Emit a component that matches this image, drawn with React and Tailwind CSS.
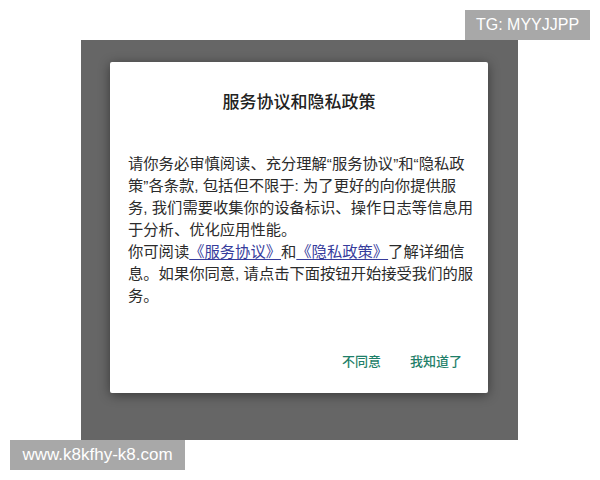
const cjk = { fontFamily: '"Liberation Sans", "Noto Sans CJK SC", sans-serif' };

const Link = ({ children }) => (
  <span className="text-[#363c9c] underline underline-offset-2 decoration-[1px]">{children}</span>
);

const App = () => {
  return (
    <div className="w-[600px] h-[480px] bg-white overflow-hidden" style={cjk}>
      {/* top watermark */}
      <div className="flex justify-end pt-[10px] pr-[10px]">
        <div className="h-[30px] w-[125px] bg-[#a8a8a8] text-white text-[16px] flex items-center justify-center">
          TG: MYYJJPP
        </div>
      </div>

      {/* dimmed screen */}
      <div className="ml-[81px] w-[437px] h-[400px] bg-[#666666] pt-[22px] pl-[29px]">
        <div className="w-[378px] h-[331px] bg-white rounded-[2px] shadow-[0_2px_12px_rgba(0,0,0,0.45)] flex flex-col">
          <h1 className="pt-[29px] text-center text-[17px] leading-[24px] font-medium text-[#222]">
            服务协议和隐私政策
          </h1>

          <p className="mt-[38px] pl-[18px] text-[15.3px] leading-[22px] text-[#2b2b2b] whitespace-nowrap">
            请你务必审慎阅读、充分理解“服务协议”和“隐私政
            <br />
            策”各条款, 包括但不限于: 为了更好的向你提供服
            <br />
            务, 我们需要收集你的设备标识、操作日志等信息用
            <br />
            于分析、优化应用性能。
            <br />
            你可阅读<Link>《服务协议》</Link>和<Link>《隐私政策》</Link>了解详细信
            <br />
            息。如果你同意, 请点击下面按钮开始接受我们的服
            <br />
            务。
          </p>

          <div className="mt-[45px] flex justify-end gap-[29px] pr-[26px] text-[13px] leading-[20px] font-medium text-[#1f7f69]">
            <button type="button">不同意</button>
            <button type="button">我知道了</button>
          </div>
        </div>
      </div>

      {/* bottom watermark */}
      <div className="ml-[10px] h-[30px] w-[175px] bg-[#a8a8a8] text-white text-[17px] flex items-center justify-center">
        www.k8kfhy-k8.com
      </div>
    </div>
  );
};

export default App;
